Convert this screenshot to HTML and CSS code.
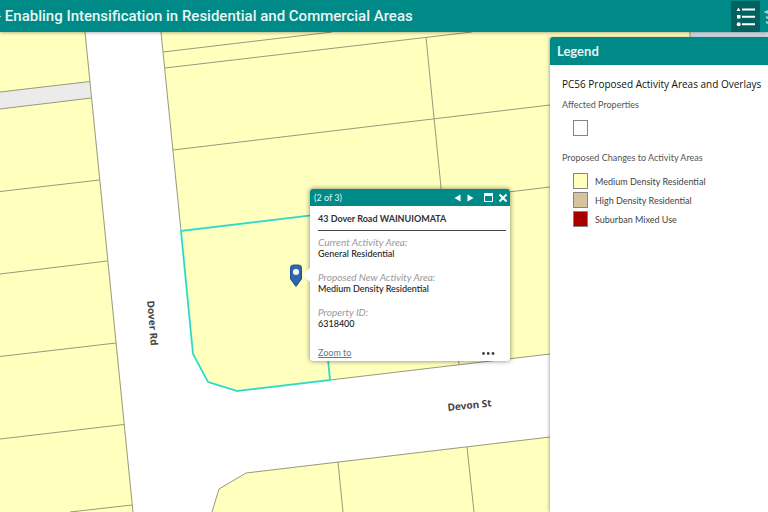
FILE: index.html
```html
<!DOCTYPE html>
<html lang="en">
<head>
<meta charset="utf-8">
<title>Enabling Intensification in Residential and Commercial Areas</title>
<link rel="stylesheet" href="styles.css">
</head>
<body>
<header class="topbar">
  <h1 class="topbar-title">- Enabling Intensification in Residential and Commercial Areas</h1>
  <div class="tools">
    <button class="tool tool-active" type="button" aria-label="Legend">
      <svg width="20" height="20" viewBox="0 0 20 20" fill="#fff">
        <path d="M2.500 0.500 4.500 4H0.500zM1 8h3.500v3.500H1zM6 1.500h13v2H6zM6 8.800h13v2H6zM6 16.300h13v2H6z"/>
        <circle cx="2.700" cy="17.300" r="2"/>
      </svg>
    </button>
    <button class="tool tool-next" type="button" aria-label="Layers">
      <svg width="20" height="20" viewBox="0 0 20 20" fill="none" stroke="#9fd3d0" stroke-width="2">
        <path d="M2 5l9-4 9 4-9 4zM2 10l9 4 9-4M2 15l9 4 9-4"/>
      </svg>
    </button>
  </div>
</header>
<main class="stage">
  <svg class="map" viewBox="0 32 768 480" preserveAspectRatio="xMinYMin slice" role="img" aria-label="Property map">
    <rect class="road" x="0" y="32" width="768" height="480"/>
    <g class="zone">
      <path d="M0 32H85L133 512H0z"/>
      <path d="M161 32H768V328L330 380 237 391 208 382 193 354 181 231z"/>
      <path d="M212 512 219 489 246 473 768 411V512z"/>
    </g>
    <path class="lane" d="M0 92 90 81.500 91.500 98 0 109z"/>
    <path class="water" d="M690 32H768V60H690z"/>
    <g class="parcel">
      <path d="M85 32 133 512M0 92 90 81.500M0 109 91.500 98M0 191.500 99.500 180M0 274 107.500 261M0 356.500 116 343M0 439 124 424.500M70 512 132 505"/>
      <path d="M161 32 181 231M163 52 332 32M165 68 472 32M173 150 550 105M181 231 550 187M426 37 434 118 459 365M330 380 550 354M690 32V60"/>
      <path d="M212 512 219 489 246 473 550 437M338 462 343 512M467 447 474 512"/>
    </g>
    <path class="selected" d="M181 231 193 354 208 382 237 391 330 380 314 215z"/>
    <path class="selected-core" d="M181 231 193 354 208 382 237 391 330 380 314 215z"/>
    <text class="street" transform="translate(147 301) rotate(85)">Dover Rd</text>
    <text class="street" transform="translate(448 411) rotate(-6)">Devon St</text>
    <path class="pin" d="M290.500 268q0-3 3-3h5q3 0 3 3v11L296 286.500 290.500 279z"/>
    <circle cx="296" cy="272" r="3" fill="#fff"/>
  </svg>

  <section class="popup" aria-label="Property details">
    <header class="popup-bar">
      <span class="popup-count">(2 of 3)</span>
      <button type="button" aria-label="Previous"><svg width="7" height="8" viewBox="0 0 7 8"><path d="M6.500 0.500v7L0.500 4z" fill="#fff"/></svg></button>
      <button class="popup-next" type="button" aria-label="Next"><svg width="7" height="8" viewBox="0 0 7 8"><path d="M0.500 0.500v7l6-3.500z" fill="#fff"/></svg></button>
      <button class="popup-max" type="button" aria-label="Maximize"><svg width="9" height="9" viewBox="0 0 9 9"><path d="M0.500 1.500h8v7h-8z" fill="none" stroke="#fff"/><path d="M0 0h9v3H0z" fill="#fff"/></svg></button>
      <button type="button" aria-label="Close"><svg width="8" height="8" viewBox="0 0 8 8"><path d="M0.500 0.500l7 7M7.500 0.500l-7 7" stroke="#fff" stroke-width="2"/></svg></button>
    </header>
    <div class="popup-body">
      <h2 class="popup-title">43 Dover Road WAINUIOMATA</h2>
      <dl class="facts">
        <div><dt>Current Activity Area:</dt><dd>General Residential</dd></div>
        <div><dt>Proposed New Activity Area:</dt><dd>Medium Density Residential</dd></div>
        <div><dt>Property ID:</dt><dd>6318400</dd></div>
      </dl>
      <footer class="popup-foot">
        <a href="#">Zoom to</a>
        <button type="button" aria-label="More"><svg width="13" height="3" viewBox="0 0 13 3" fill="#444"><circle cx="1.500" cy="1.500" r="1.400"/><circle cx="6.200" cy="1.500" r="1.400"/><circle cx="11" cy="1.500" r="1.400"/></svg></button>
      </footer>
    </div>
  </section>

  <aside class="legend">
    <h2 class="legend-bar">Legend</h2>
    <div class="legend-body">
      <h3 class="legend-title">PC56 Proposed Activity Areas and Overlays</h3>
      <h4 class="legend-group">Affected Properties</h4>
      <ul class="keys">
        <li><span class="swatch swatch-none"></span></li>
      </ul>
      <h4 class="legend-group">Proposed Changes to Activity Areas</h4>
      <ul class="keys">
        <li><span class="swatch swatch-medium"></span>Medium Density Residential</li>
        <li><span class="swatch swatch-high"></span>High Density Residential</li>
        <li><span class="swatch swatch-mixed"></span>Suburban Mixed Use</li>
      </ul>
    </div>
  </aside>
</main>
</body>
</html>
```
FILE: styles.css
```css
* { box-sizing: border-box; }

body {
  margin: 0;
  height: 100vh;
  display: flex;
  flex-direction: column;
  overflow: hidden;
  font-family: Lato, Roboto, sans-serif;
  font-size: 9px;
  color: #333;
}

h1, h2, h3, h4, ul, dl, dd { margin: 0; padding: 0; }

button {
  display: flex;
  padding: 0;
  border: 0;
  background: none;
}

.topbar {
  display: flex;
  flex: none;
  justify-content: space-between;
  height: 32px;
  background: #008a87;
  color: #e8f6f5;
  overflow: hidden;
  z-index: 1;
  box-shadow: 0 1px 3px rgba(0, 0, 0, 0.3);
}

.topbar-title {
  margin-left: -4px;
  font-family: Roboto, sans-serif;
  font-size: 15px;
  font-weight: 500;
  line-height: 32px;
  white-space: nowrap;
}

.tools {
  display: flex;
  flex: none;
  width: 37px;
  gap: 4px;
}

.tool {
  flex: none;
  width: 29px;
  height: 31px;
  margin-top: 1px;
  align-items: center;
  justify-content: center;
}

.tool-active { background: #00615f; }
.tool-next { justify-content: flex-start; }

.stage {
  position: relative;
  flex: 1;
  min-height: 0;
  display: flex;
  justify-content: flex-end;
}

.map {
  position: absolute;
  inset: 0;
  width: 100%;
  height: 100%;
}

.road { fill: #fff; }
.zone { fill: #ffffbe; }
.lane { fill: #ebebeb; }
.water { fill: #cfe0ea; }
.parcel { fill: none; stroke: #99997a; stroke-width: 1; }
.selected { fill: none; stroke: #4ff0e4; stroke-width: 2; }
.selected-core { fill: none; stroke: #35cdb5; stroke-width: 1; }
.pin { fill: #2f66ad; stroke: #24508c; }

.street {
  font-family: "Noto Sans", sans-serif;
  font-size: 10px;
  font-weight: 700;
  fill: #444;
}

.popup {
  position: absolute;
  left: 310px;
  top: 157px;
  width: 200px;
  border-radius: 3px;
  background: #fff;
  box-shadow: 0 0 5px rgba(0, 0, 0, 0.5);
}

.popup::before {
  content: "";
  position: absolute;
  left: -7px;
  top: 79px;
  border: 7px solid transparent;
  border-left: 0;
  border-right-color: #fff;
}

.popup-bar {
  display: flex;
  align-items: center;
  height: 17px;
  padding: 0 3px 0 4px;
  gap: 6px;
  border-radius: 3px 3px 0 0;
  background: #008a87;
  color: #e4f3f2;
}

.popup-count { flex: 1; }
.popup-max { margin-left: 4px; }

.popup-body { padding: 5px 4px 2px 8px; }

.popup-title {
  padding: 2px 0 5px;
  border-bottom: 1px solid #444;
  font-size: 9px;
  line-height: 12px;
}

.facts {
  display: grid;
  gap: 11px;
  padding-top: 5px;
  line-height: 12px;
}

.facts dt { font-size: 10px; font-style: italic; color: #999; }
.facts dd { font-weight: 500; color: #222; }

.popup-foot {
  display: flex;
  align-items: center;
  justify-content: space-between;
  padding: 17px 11px 0 0;
  line-height: 12px;
}

.popup-foot a { color: #587a8c; }

.legend {
  position: relative;
  display: flex;
  flex-direction: column;
  flex: none;
  width: 218px;
  margin-top: 5px;
  border-radius: 3px 0 0 0;
  background: #fff;
  box-shadow: -1px 0 3px rgba(0, 0, 0, 0.3);
}

.legend-bar {
  padding-left: 7px;
  border-radius: 3px 0 0 0;
  background: #008a87;
  color: #e4f5f4;
  font-size: 13px;
  font-weight: 700;
  line-height: 28px;
}

.legend-body { padding: 11px 0 0 12px; }

.legend-title {
  font-family: "Open Sans", sans-serif;
  font-size: 10px;
  font-weight: 500;
  line-height: 16px;
  white-space: nowrap;
  color: #111;
}

.legend-group {
  padding-top: 5px;
  font-size: 9px;
  font-weight: 400;
  line-height: 16px;
  color: #555;
}

.keys {
  display: grid;
  gap: 3px;
  padding: 7px 0 9px 11px;
  list-style: none;
  color: #444;
}

.keys li {
  display: flex;
  align-items: center;
  gap: 7px;
}

.swatch {
  width: 15px;
  height: 16px;
  border: 1px solid #858585;
}

.swatch-none { background: #fff; }
.swatch-medium { background: #ffffbe; }
.swatch-high { background: #d7c29e; }
.swatch-mixed { background: #a80000; }
```
